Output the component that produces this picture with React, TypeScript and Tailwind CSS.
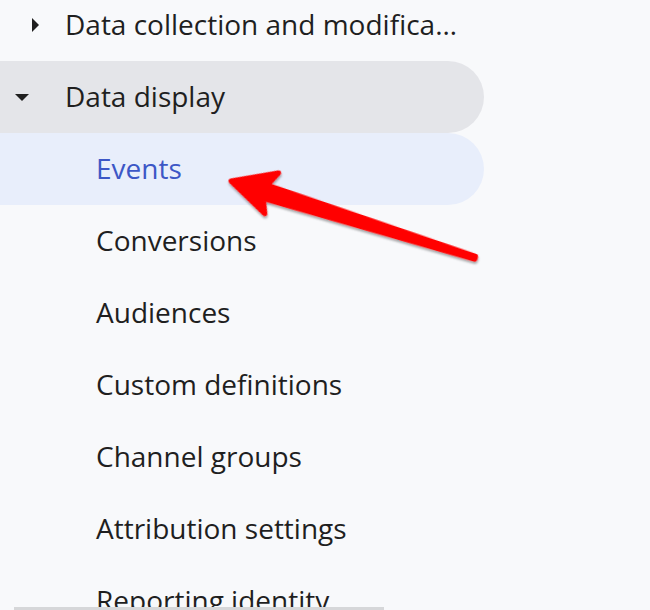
import React from "react";

const children = [
  "Events",
  "Conversions",
  "Audiences",
  "Custom definitions",
  "Channel groups",
  "Attribution settings",
  "Reporting identity",
];

function Arrow() {
  return (
    <svg className="absolute left-0 top-0 pointer-events-none" width="650" height="610">
      <defs>
        <filter id="sh" x="-10%" y="-10%" width="120%" height="130%">
          <feDropShadow dx="1" dy="2" stdDeviation="1.2" floodColor="#000" floodOpacity="0.35" />
        </filter>
      </defs>
      <g transform="translate(231,181) rotate(17.45)" filter="url(#sh)">
        <path
          d="M0,0 L43,-22 L36,-7 L256,-1.5 L256,1.5 L36,7 L42,21 Z"
          fill="#ff0000"
          stroke="#ff0000"
          strokeWidth="5"
          strokeLinejoin="round"
        />
      </g>
    </svg>
  );
}

export default function App() {
  return (
    <div
      className="relative w-[650px] h-[610px] overflow-hidden bg-[#f8f9fb] text-[#1f1f1f]"
      style={{ fontFamily: "'Open Sans', Roboto, sans-serif" }}
    >
      <div className="flex flex-col w-[484px] -mt-[11px]">
        <div className="flex items-center h-[72px] pr-[20px]">
          <div className="w-[65px] shrink-0 flex justify-center pl-[6px]">
            <span className="w-0 h-0 border-y-[7px] border-y-transparent border-l-[7px] border-l-[#1f1f1f]" />
          </div>
          <span className="text-[28px] truncate pb-[3px]">Data collection and modification</span>
        </div>
        <div className="flex items-center h-[72px] bg-[#e4e5e9] rounded-r-[36px]">
          <div className="w-[65px] shrink-0 flex justify-center pl-[1px] pr-[22px] pt-[1px]">
            <span className="w-0 h-0 border-x-[7px] border-x-transparent border-t-[7px] border-t-[#1f1f1f]" />
          </div>
          <span className="text-[28px] pb-[3px]">Data display</span>
        </div>
        {children.map((c, i) => (
          <div
            key={c}
            className={
              "flex items-center h-[72px] pl-[96px] rounded-r-[36px] " +
              (i === 0 ? "bg-[#e8eefb] text-[#3c57c6]" : "")
            }
          >
            <span className="text-[28px] whitespace-nowrap pb-[3px]">{c}</span>
          </div>
        ))}
      </div>
      <div className="absolute left-[14px] top-[607px] w-[370px] h-[3px] bg-[#d6d7d9]" />
      <Arrow />
    </div>
  );
}
